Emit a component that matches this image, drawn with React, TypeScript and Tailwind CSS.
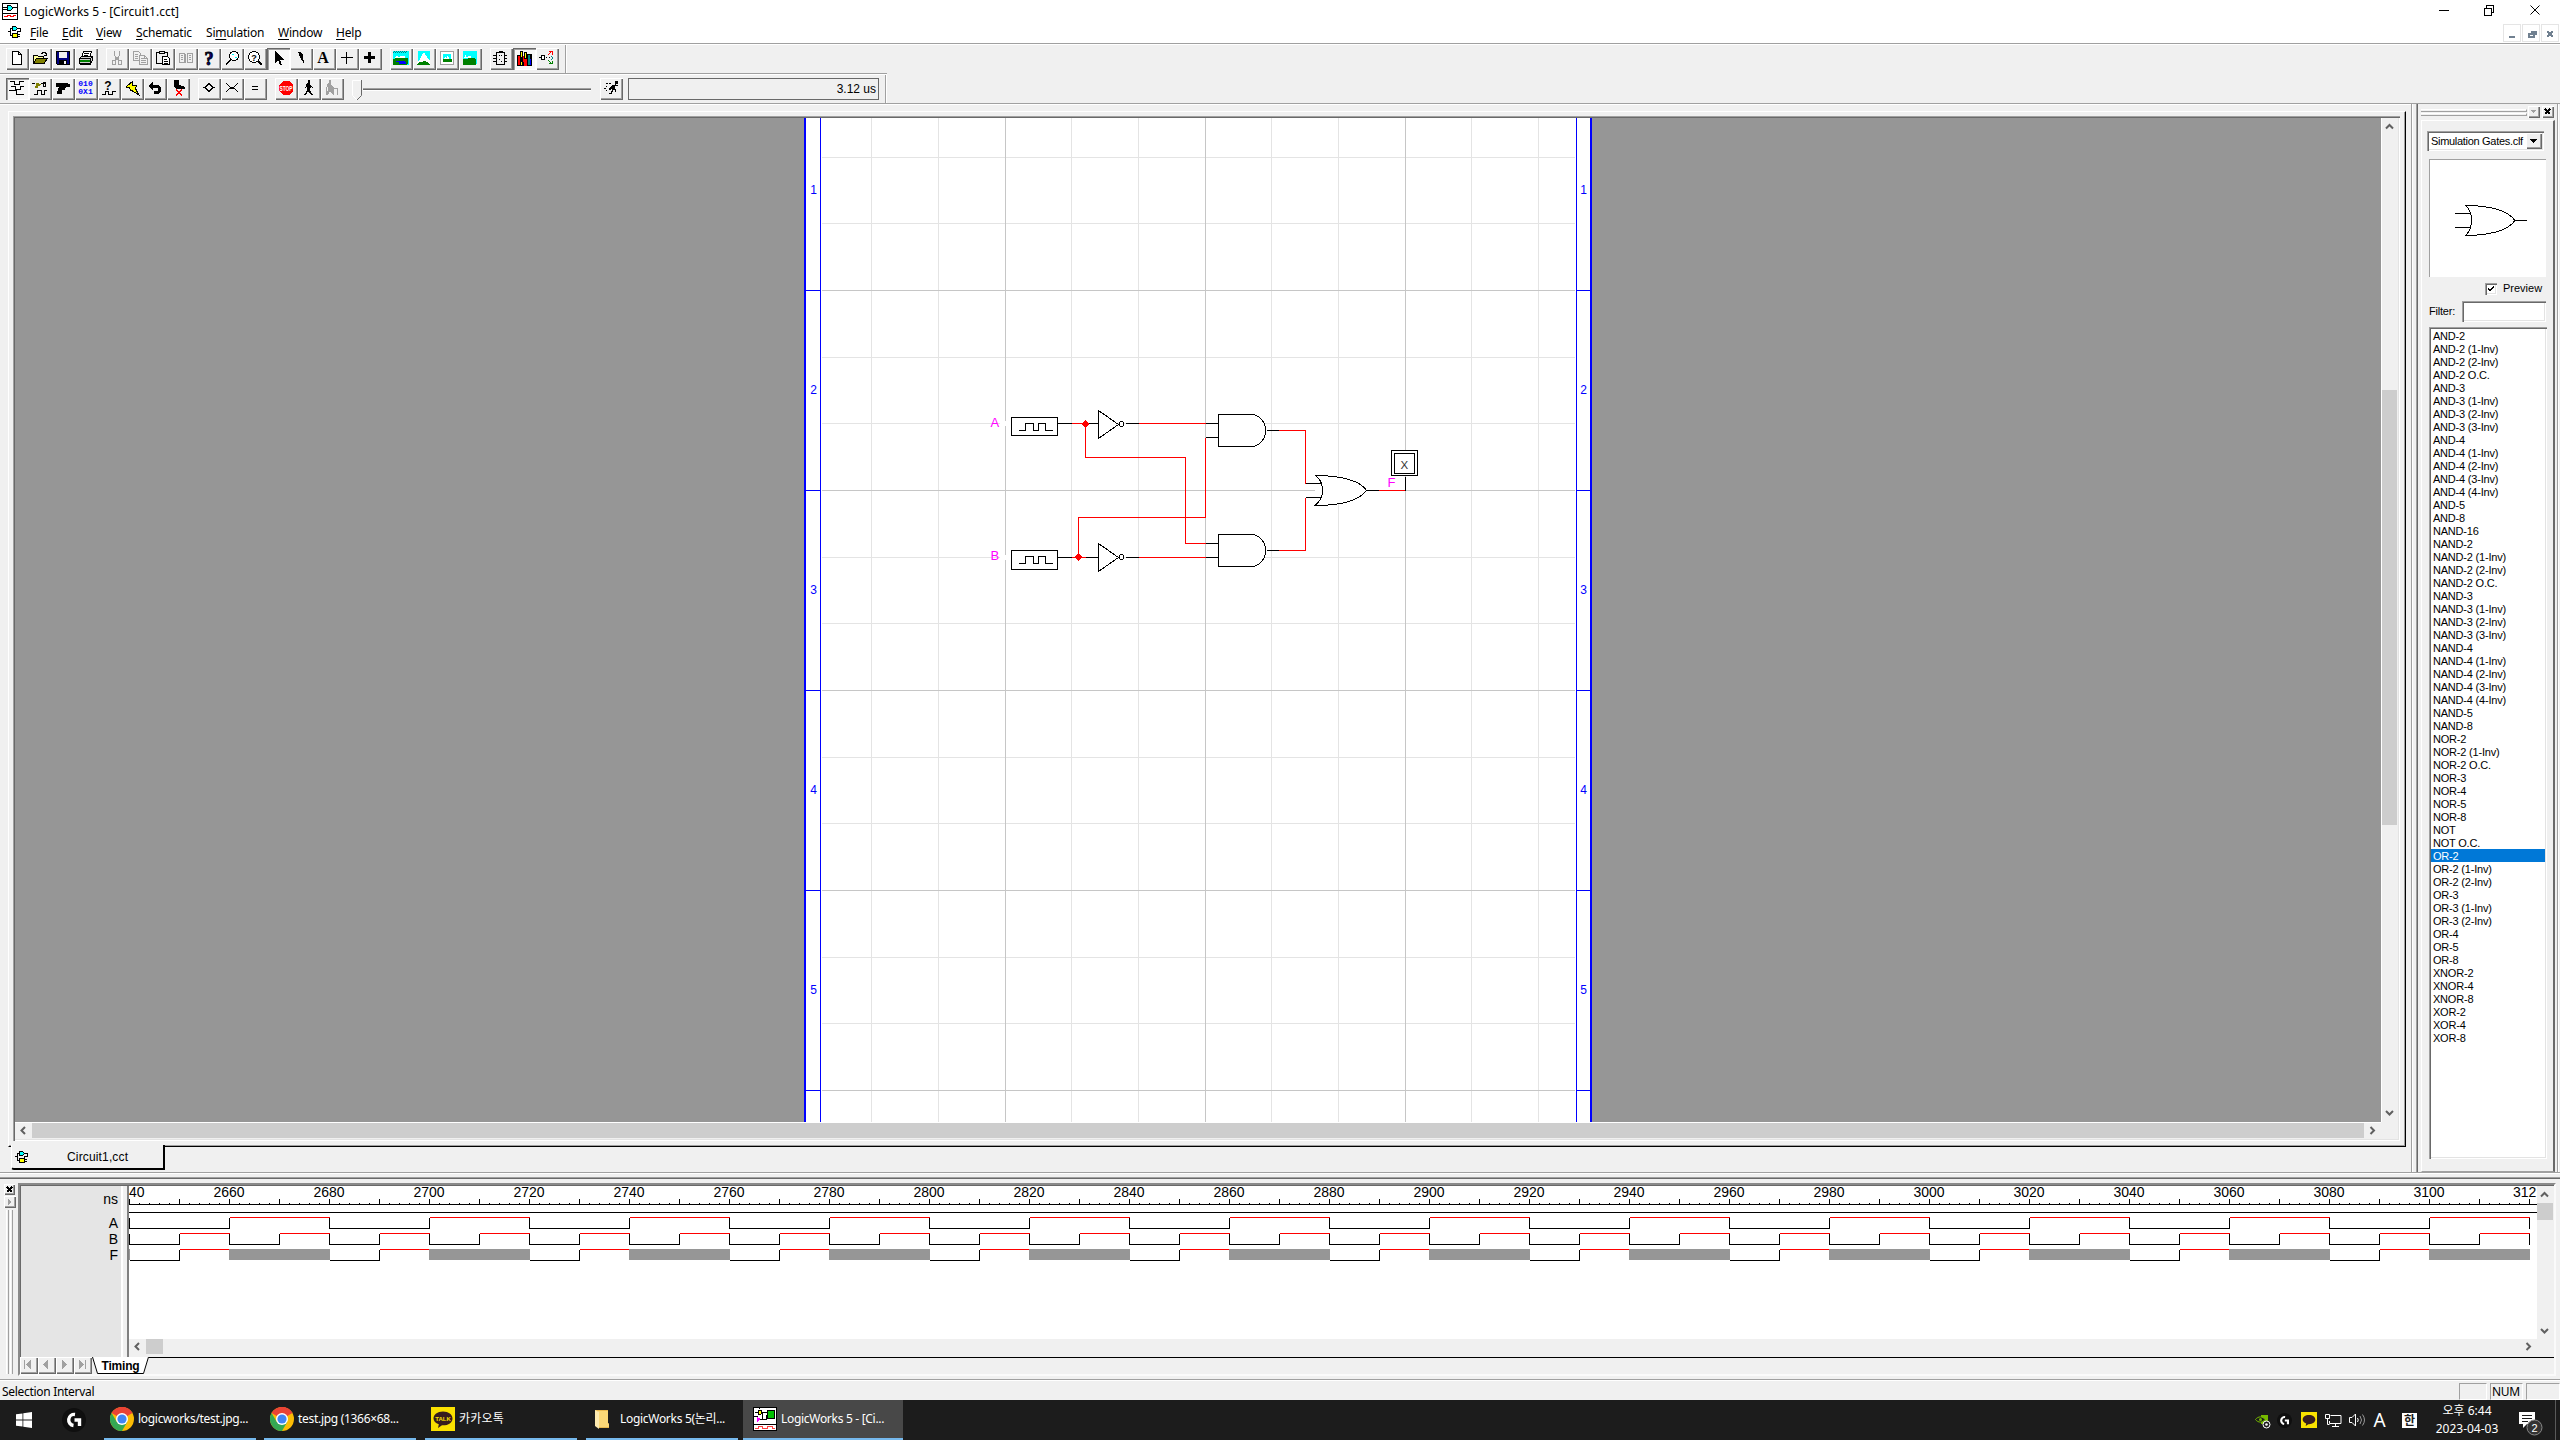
import React from "react";

const UI = "font-['Noto_Sans','Noto_Sans_CJK_KR',sans-serif]";
const SANS = "font-['Liberation_Sans','Noto_Sans_CJK_KR',sans-serif]";
const RAISED =
  "bg-[#f0f0f0] shadow-[inset_1px_1px_#ffffff,inset_-1px_-1px_#696969,inset_-2px_-2px_#a0a0a0]";
const PRESSED =
  "bg-[#f8f8f8] shadow-[inset_1px_1px_#696969,inset_2px_2px_#a0a0a0,inset_-1px_-1px_#ffffff]";

function Ico({ children, w = 16, h = 16, smooth = false }: { children: React.ReactNode; w?: number; h?: number; smooth?: boolean }) {
  return (
    <svg width={w} height={h} viewBox={`0 0 ${w} ${h}`} fill="none" shapeRendering={smooth ? "auto" : "crispEdges"} className="block shrink-0">
      {children}
    </svg>
  );
}

/* ---------- toolbar icons ---------- */
const K = "#000";
const icons: Record<string, React.ReactNode> = {
  new: <path d="M3.5 1.5h6l3 3v10h-9zM9.5 1.5v3h3" stroke={K} fill="#fff" />,
  open: (
    <>
      <path d="M1.5 13.5v-8h4l1 1h5v2" stroke={K} fill="#ffff9a" />
      <path d="M1.5 13.5l3-5h11l-3.500 5z" stroke={K} fill="#808000" />
      <path d="M9 3h1v-1h3v1h1v2M12 5h3" stroke={K} />
    </>
  ),
  save: (
    <>
      <path d="M1.500 1.500h13v13h-12l-1-1z" stroke={K} fill="#000080" />
      <path d="M4 2h8v6h-8z" fill="#f0f0f0" />
      <path d="M4 10h8v4h-8z" fill={K} />
      <path d="M9 11h2v3h-2z" fill="#f0f0f0" />
    </>
  ),
  print: (
    <>
      <path d="M5.500 1.500h8l-2 6h-8z" stroke={K} fill="#fff" />
      <path d="M6 3.500h5M6 5.500h4" stroke={K} />
      <path d="M1.500 8.500l2-2h11l-2 2zM1.500 8.500h11v5h-11zM12.500 8.500l2-2v4l-2 3z" stroke={K} fill="#d0d0d0" />
      <path d="M2 10h10v2h-10z" fill="#008000" />
      <path d="M2 13h11v2h-11z" fill={K} />
    </>
  ),
  cut: (
    <>
      <path d="M5.500 1v4l1 2v2M10.500 1v4l-1 2v2M6.500 7l3 3M9.500 7l-3 3" stroke="#a0a0a0" />
      <path d="M3.500 10.500h3v4h-3zM9.500 10.500h3v4h-3z" stroke="#a0a0a0" />
    </>
  ),
  copy: (
    <>
      <path d="M1.500 1.500h5l2 2v7h-7z" stroke="#a0a0a0" />
      <path d="M7.500 5.500h5l3 3v6h-8zM12.500 5.500v3h3M3 4.500h3M3 6.500h3M3 8.500h3M9 8.500h3M9 10.500h5M9 12.500h5" stroke="#a0a0a0" fill="#f0f0f0" />
    </>
  ),
  paste: (
    <>
      <path d="M1.500 2.500h11v11h-11z" stroke={K} fill="#f0f0f0" />
      <path d="M4 1h6v3h-6z" fill={K} />
      <path d="M5 2h4v1h-4z" fill="#f0f0f0" />
      <path d="M7.500 6.500h5l2 2v6h-7z" stroke={K} fill="#fff" />
      <path d="M9 9.500h3M9 11.500h4M9 13h4" stroke={K} />
    </>
  ),
  book: (
    <>
      <path d="M1.500 3.500h5v9h-5zM9.500 3.500h5v9h-5zM6.500 4.500h1v8h-1M8.500 4.500h1" stroke="#a0a0a0" />
      <path d="M3 5.500h2M3 7.500h2M3 9.500h2M11 5.500h2M11 7.500h2M11 9.500h2" stroke="#a0a0a0" />
    </>
  ),
  help: (
    <text x="8" y="14.500" fontSize="18" fontWeight="bold" textAnchor="middle" fill="#000080" stroke={K} strokeWidth="0.900" className="font-['Liberation_Serif',serif]">?</text>
  ),
  zoom: (
    <>
      <circle cx="10" cy="6" r="4.500" stroke={K} fill="#fff" />
      <path d="M8 4h2v1h-2zM11 7h2v1h-2z" fill="#00ffff" />
      <path d="M7 9.500l-5 5" stroke={K} strokeWidth="2" />
    </>
  ),
  zoomq: (
    <>
      <circle cx="7" cy="7" r="5.500" stroke={K} fill="#fff" />
      <text x="7" y="10.500" fontSize="9" fontWeight="bold" textAnchor="middle" fill={K} className={SANS}>?</text>
      <path d="M11 11l4 4" stroke={K} strokeWidth="1.500" />
    </>
  ),
  arrow: <path d="M5 1v12l3-3 2 5h2l-2-5h4z" fill={K} />,
  zap: <path d="M5 2h3l2 3 1 9-4-7z" fill={K} />,
  plus: <path d="M7.500 2v12M1.500 7.500h12" stroke={K} />,
  bplus: <path d="M7.500 2v11M2 7.500h11" stroke={K} strokeWidth="3" />,
  pic1: (
    <>
      <path d="M0 1h16v14h-16z" fill="#00ffff" />
      <path d="M1 1.500h1m1 0h1m1 0h1m1 0h1m1 0h1m1 0h1m1 0h1M0 2.500h1m1 0h1m1 0h1m1 0h1m1 0h1m1 0h1m1 0h1" stroke="#008080" />
      <path d="M2 7h1v-1h2v1h2v-1h5v2h-10z" fill="#fff" />
      <path d="M0 9l3-1h12v6l-2 1h-13z" fill="#008000" />
      <path d="M3 11.500h9M6 13h7" stroke="#0000ff" strokeWidth="1.500" />
    </>
  ),
  pic2: (
    <>
      <path d="M2 1h12v14h-12z" fill="#00ffff" />
      <path d="M7 3h2l1 3h1v2l3 3v4h-13v-2l3-4z" fill="#fff" />
      <path d="M1 15l2-3h3l1-1h2l1 1h2l2 3z" fill="#008000" />
    </>
  ),
  pic3: (
    <>
      <path d="M1.500 1.500h13v13h-13z" stroke="#a0a0a0" fill="#fff" />
      <path d="M4 4h8v5h-8z" fill="#00ffff" />
      <path d="M5 8h1v-1h1v1h1v-2h1v1h1v2h-5z" fill="#fff" />
      <path d="M4 9h9v3h-9z" fill="#008000" />
    </>
  ),
  pic4: (
    <>
      <path d="M1 1h14v13h-14z" fill="#00ffff" />
      <path d="M2 7h1v-2h1v2h2v-1h3v2h-7z" fill="#fff" />
      <path d="M1 9h4l1-1h6l2 2v5h-13z" fill="#008000" />
    </>
  ),
  chip: (
    <>
      <path d="M3.500 2.500h8v12h-8zM5.500 1.500h4M0 5.500h3M0 8.500h3M0 11.500h3M11 5.500h3M11 8.500h3M11 11.500h3" stroke={K} fill="#f0f0f0" />
      <path d="M6 5h1v1h-1zM8 5h1v1h-1zM6 9h1v1h-1zM8 11h1v1h-1z" fill={K} />
    </>
  ),
  books: (
    <>
      <path d="M1 5h4v11h-4z" fill={K} />
      <path d="M2 6h2v9h-2z" fill="#ff0000" />
      <path d="M4 1h3v15h-3z" fill={K} />
      <path d="M5 2h1v5h-1zM5 12h1v3h-1z" fill="#ffff00" />
      <path d="M7 6h4v10h-4z" fill="#ff0000" />
      <path d="M8 2h3v7h-3zM7 12h1v4h-1z" fill={K} />
      <path d="M9 3h1v5h-1z" fill="#ffff00" />
      <path d="M11 4h5v12h-5z" fill={K} />
      <path d="M12 5h2v10h-2z" fill="#008080" />
      <path d="M14 9h1v6h-1z" fill="#0000ff" />
    </>
  ),
  net: (
    <>
      <path d="M0 7.500h2M2.500 5.500h3v4h-3z" stroke={K} fill="#fff" />
      <path d="M7 7.500h1m2 0h1" stroke={K} />
      <path d="M9 5l4-4M10 1.500h3v3" stroke="#ff0000" />
      <path d="M9 10l4 4M10 13.500h3v-3" stroke="#008000" />
      <path d="M12 6l2 2-2 2" stroke="#008080" />
    </>
  ),
  waves: <path d="M1 1.500h4v3h5v-3h5M2 6.500h4v3h5v-3h4M0 10.500h7v4h8" stroke={K} />,
  probe: (
    <>
      <path d="M2 14.500h3v-4h4v4h3v-4h3M0 3.500h3M9 3.500h5M11 2h2v4h-2z" stroke={K} />
      <path d="M4 3h3v3h-3zM3 6h3v2h-3z" fill="#808000" />
      <path d="M6 6l3-2" stroke="#808000" />
    </>
  ),
  gun: <path d="M1 3h12v1h2v3h-3l-2 1v2h-3v4h-5v-2l2-5h-3z" fill={K} />,
  trig: (
    <>
      <path d="M1 14.500h3v-3h3v3h4v-3h4" stroke={K} />
      <text x="7" y="9.500" fontSize="12" fontWeight="bold" textAnchor="middle" fill={K} className={SANS}>?</text>
    </>
  ),
  bolt: <path d="M2.500 6.500l6-5v4h4l-1 3 3 6-7-4h-1l-1-3h-3z" fill="#ffff00" stroke={K} />,
  undo: <path d="M1 6l5-4v3h5l3 3v3l-3 3h-4v-3h3l1-1v-1l-1-1h-4v3z" fill={K} />,
  boot: (
    <>
      <path d="M4 0h5v5l6 2v2h-8l-3-2z" fill={K} />
      <path d="M6 10l6 5M12 10l-6 5" stroke="#ff0000" strokeWidth="1.500" />
    </>
  ),
  diamond: <path d="M2 7.500h2l4-4 4 4h2M4 7.500l4 4 4-4" stroke={K} />,
  cross: <path d="M2 3l4 4h4l4-4M2 12l4-4h4l4 4" stroke={K} />,
  eq: <path d="M5 6.500h6M5 9.500h6" stroke={K} />,
  stop: (
    <>
      <path d="M5 1h6l4 4v6l-4 4h-6l-4-4v-6z" fill="#ff0000" />
      <text x="8" y="10.500" fontSize="6.500" fontWeight="bold" textAnchor="middle" fill="#fff" textLength="13" lengthAdjust="spacingAndGlyphs" className={SANS}>STOP</text>
    </>
  ),
  walk: <path d="M7 0h2v3h-2zM6 3h3l1 3 2 1v1l-2-1v1h-1v2l2 4h1v1h-2l-3-4-2 4h-2v-1h1l2-4v-4l-1 2h-1z" fill={K} />,
  walkg: (
    <path d="M5 0h2v3h-2zM4 3h3l1 3 2 1v1h4v7h-1v-6h-3v6h-1l-3-4-2 4h-2v-1l2-4v-4l-1 2h-1zM2 8h1v7h-1z" fill="#a0a0a0" />
  ),
  run: <path d="M12 1h3v3h-2v1h2v1h-3v3h1v3h-1v-2h-2l-1 4h-3v-1h2l1-4-3 1v-1l3-4h3zM6 3h2v1h-2zM3 3h2v1h-2zM3 6h1v1h-1zM1 8h2v1h-2zM3 10h1v1h-1z" fill={K} />,
};

function Tool({ name, pressed }: { name: string; pressed?: boolean }) {
  let body: React.ReactNode;
  if (name === "A") body = <span className="pr-px font-['Liberation_Serif',serif] text-[16px] font-bold leading-[16px]">A</span>;
  else if (name === "bits")
    body = (
      <span className="flex flex-col font-['Liberation_Mono',monospace] text-[8px] font-bold leading-[8px] text-[#0000ff]">
        <span>010</span>
        <span>0X1</span>
      </span>
    );
  else body = <Ico>{icons[name]}</Ico>;
  return (
    <div className={`flex h-[22px] w-[23px] items-center justify-center pr-[2px] pb-[2px] ${pressed ? PRESSED : RAISED}`}>{body}</div>
  );
}

function Group({ names, pressed }: { names: string[]; pressed?: string }) {
  return (
    <div className="flex">
      {names.map((n) => (
        <Tool key={n} name={n} pressed={n === pressed} />
      ))}
    </div>
  );
}

function CircuitIcon() {
  return (
    <Ico w={13} h={14}>
      <path d="M0 6.500h2M2.500 3v8M2 3.500h2M2 10.500h2M9 3.500h3v3h-3v2M10 9.500h2M10 11.500h2" stroke={K} />
      <path d="M4 1h4v1h1v1h1v1h-1v1h-1v1h-4zM4 8h6v5h-6z" fill={K} />
      <path d="M5 2h3v1h1v1h-1v1h-3z" fill="#00ffff" />
      <path d="M5 9h4v3h-4z" fill="#ffff00" />
    </Ico>
  );
}

/* ---------- title + menu ---------- */
const menus: [string, string, string, string][] = [
  ["", "F", "ile", "ml-[9px]"],
  ["", "E", "dit", "ml-[14px]"],
  ["", "V", "iew", "ml-[14px]"],
  ["", "S", "chematic", "ml-[14px]"],
  ["Si", "m", "ulation", "ml-[14px]"],
  ["", "W", "indow", "ml-[14px]"],
  ["", "H", "elp", "ml-[14px]"],
];
const menuWidths = ["w-[18px]", "w-[20px]", "w-[26px]", "w-[56px]", "w-[58px]", "w-[44px]", "w-[26px]"];

function TitleBar() {
  return (
    <div className="flex h-[24px] items-start bg-white">
      <div className="mt-[3px] ml-[2px]">
        <Ico h={17}>
          <path d="M.5.5h15v15.500h-15z" stroke={K} fill="#fff" />
          <path d="M1 10.500h14M1 4.500h4M10 4.500h5M1 6.500h4" stroke={K} />
          <path d="M5 2h4v1h1v1h1v2h-1v1h-1v1h-4z" fill={K} />
          <path d="M6 3h3v1h1v2h-1v1h-3z" fill="#00ffff" />
          <path d="M2 13.500h3v-1h3v1h3v-1h3" stroke="#ff0000" />
        </Ico>
      </div>
      <div className={`${UI} ml-[6px] text-[12px] leading-[23px] whitespace-nowrap text-black`}>LogicWorks 5 - [Circuit1.cct]</div>
      <div className="ml-auto flex pr-[19px] pt-[3px]">
        <svg width="103" height="14" viewBox="2438 3 103 14" fill="none" stroke={K}>
          <path d="M2439 10.500h10M2484.500 8.500h7v7h-7zM2486.500 8v-2.500h7v7h-2" shapeRendering="crispEdges" />
          <path d="M2530.500 5.500l9 9M2539.500 5.500l-9 9" />
        </svg>
      </div>
    </div>
  );
}

function MenuBar() {
  return (
    <div className="flex h-[19px] items-start bg-white">
      <div className="mt-px ml-[8px]">
        <CircuitIcon />
      </div>
      <div className={`${UI} flex text-[12px] leading-[17px] tracking-[-0.2px] text-black`}>
        {menus.map(([a, u, b, m], i) => (
          <span key={u + b} className={`${m} ${menuWidths[i]} whitespace-nowrap`}>
            {a}
            <span className="underline underline-offset-2">{u}</span>
            {b}
          </span>
        ))}
      </div>
      <div className="ml-auto flex gap-px pr-px">
        {["M5 11.500h6", "M5.500 8.500h5v3h-5zM8 6.500h4.500v3.500", "M5.500 6l5 6M10.500 6l-5 6"].map((d) => (
          <div key={d} className="h-[18px] w-[18px] border border-[#e5e5e5]">
            <Ico>
              <path d={d} stroke="#708090" strokeWidth="2" />
            </Ico>
          </div>
        ))}
      </div>
    </div>
  );
}

/* ---------- schematic ---------- */
function AndGate({ y }: { y: number }) {
  return <path d={`M1218 ${y}H1252C1260 ${y + 1} 1265 ${y + 8} 1265 ${y + 16}S1260 ${y + 31} 1252 ${y + 32}H1218Z`} fill="#fff" />;
}
function ClockSrc({ y, h }: { y: number; h: number }) {
  return (
    <>
      <rect x="1011" y={y} width="46" height={h} fill="#fff" />
      <path d={`M1018 ${y + 13}h7v-7h8v7h5v-7h7v7h7`} />
    </>
  );
}
const minorX = [871, 938, 1071, 1138, 1271, 1338, 1471, 1538];
const majorX = [1005, 1205, 1405];
const minorY = [157, 223, 357, 423, 557, 623, 757, 823, 957, 1023];
const majorY = [290, 490, 690, 890, 1090];

function Schematic() {
  return (
    <svg width="2366" height="1004" viewBox="15 118 2366 1004" fill="none" className="block" shapeRendering="crispEdges">
      <rect x="15" y="118" width="2366" height="1004" fill="#969696" />
      <rect x="804" y="118" width="788" height="1004" fill="#fff" />
      <g transform="translate(.5 .5)">
        <path stroke="#e4e4e4" d={minorX.map((x) => `M${x} 117V1122`).join("") + minorY.map((y) => `M821 ${y}H1574.500`).join("")} />
        <path stroke="#c6c6c6" d={majorX.map((x) => `M${x} 117V1122`).join("") + majorY.map((y) => `M821 ${y}H1574.500`).join("")} />
        <path stroke="#00f" d={"M820 117V1122M1576 117V1122" + majorY.map((y) => `M805 ${y}H820M1576 ${y}H1591`).join("")} />
      </g>
      <path stroke="#00f" strokeWidth="2" d="M805 118V1122M1591 118V1122" />
      <g className={SANS} fontSize="12" fill="#00f" textAnchor="middle">
        {[1, 2, 3, 4, 5].map((n) => (
          <React.Fragment key={n}>
            <text x="813.500" y={194 + (n - 1) * 200}>{n}</text>
            <text x="1583.500" y={194 + (n - 1) * 200}>{n}</text>
          </React.Fragment>
        ))}
      </g>
      <rect x="1000" y="421" width="11" height="5" fill="#fff" />
      <rect x="1000" y="555" width="11" height="5" fill="#fff" />
      <rect x="1315" y="488" width="8" height="5" fill="#fff" />
      <g transform="translate(.5 .5)" stroke="#f00">
        <path d="M1071 423H1085V457H1185V543H1205M1138 423H1205M1071 557H1098M1078 557V517H1205V437M1138 557H1205M1278 430H1305V483M1278 550H1305V497M1378 490H1405" />
      </g>
      <g transform="translate(.5 .5)" stroke="#000">
        <path d="M1057 423H1071M1085 423H1098M1057 557H1071M1085 557H1098M1125 423H1138M1125 557H1138M1205 423H1218M1205 437H1218M1205 543H1218M1205 557H1218M1266 430H1278M1266 550H1278M1366 490H1378M1405 490V476" />
        <ClockSrc y={417} h={18} />
        <ClockSrc y={550} h={19} />
        <path d="M1098 410L1118 424L1098 438ZM1098 543L1118 557L1098 571Z" fill="#fff" />
        <circle cx="1121" cy="423.500" r="2.500" fill="#fff" />
        <circle cx="1121" cy="556.500" r="2.500" fill="#fff" />
        <AndGate y={414} />
        <AndGate y={534} />
        <path d="M1315 475C1340 475 1360 480 1366 490C1358 501 1340 505 1314 505Q1322 500 1322 490Q1322 480 1315 475Z" fill="#fff" />
        <path d="M1305 483H1321M1305 497H1321" />
        <rect x="1391" y="450" width="26" height="25" fill="#fff" />
        <rect x="1394" y="453" width="20" height="20" />
      </g>
      <path d="M1085.500 420.500l3.500 3.500-3.500 3.500-3.500-3.500zM1078.500 553.500l3.500 3.500-3.500 3.500-3.500-3.500z" fill="#f00" stroke="#f00" />
      <g className={SANS} fontSize="13" fill="#f0f" stroke="none">
        <text x="990.500" y="427">A</text>
        <text x="990.500" y="560">B</text>
        <text x="1387.500" y="487">F</text>
        <text x="1400.500" y="469" fill="#333" fontSize="11.500">X</text>
      </g>
    </svg>
  );
}

/* ---------- scrollbars ---------- */
function Chevron({ d }: { d: string }) {
  return (
    <svg width="17" height="17" viewBox="0 0 17 17" fill="none" className="block shrink-0">
      <path d={d} stroke="#606060" strokeWidth="2" />
    </svg>
  );
}
const UP = "M4 10.500l3.500-3.500 3.500 3.500";
const DOWN = "M4 6l3.500 3.500 3.500-3.500";
const LEFT = "M10 4l-3.500 3.500 3.500 3.500";
const RIGHT = "M6.500 4l3.500 3.500-3.500 3.500";

/* ---------- library panel ---------- */
const parts = [
  "AND-2", "AND-2 (1-Inv)", "AND-2 (2-Inv)", "AND-2 O.C.", "AND-3", "AND-3 (1-Inv)", "AND-3 (2-Inv)", "AND-3 (3-Inv)",
  "AND-4", "AND-4 (1-Inv)", "AND-4 (2-Inv)", "AND-4 (3-Inv)", "AND-4 (4-Inv)", "AND-5", "AND-8", "NAND-16",
  "NAND-2", "NAND-2 (1-Inv)", "NAND-2 (2-Inv)", "NAND-2 O.C.", "NAND-3", "NAND-3 (1-Inv)", "NAND-3 (2-Inv)", "NAND-3 (3-Inv)",
  "NAND-4", "NAND-4 (1-Inv)", "NAND-4 (2-Inv)", "NAND-4 (3-Inv)", "NAND-4 (4-Inv)", "NAND-5", "NAND-8",
  "NOR-2", "NOR-2 (1-Inv)", "NOR-2 O.C.", "NOR-3", "NOR-4", "NOR-5", "NOR-8", "NOT", "NOT O.C.",
  "OR-2", "OR-2 (1-Inv)", "OR-2 (2-Inv)", "OR-3", "OR-3 (1-Inv)", "OR-3 (2-Inv)", "OR-4", "OR-5", "OR-8",
  "XNOR-2", "XNOR-4", "XNOR-8", "XOR-2", "XOR-4", "XOR-8",
];
const SUNKEN =
  "bg-white shadow-[inset_1px_1px_#a0a0a0,inset_2px_2px_#696969,inset_-1px_-1px_#ffffff,inset_-2px_-2px_#e3e3e3]";

function LibraryPanel() {
  return (
    <div className="flex h-[1068px] w-[149px] border-l border-[#a0a0a0]">
      <div className="w-[4px] border-l border-white" />
      <div className="w-[2px] border-l border-[#a0a0a0] bg-[#696969]" />
      <div className="flex w-[140px] flex-col pl-[3px]">
        <div className="flex h-[16px] items-start pt-[2px]">
          <div className="mt-[3px] mr-px flex w-[106px] flex-col gap-[1px]">
            <div className="h-[3px] border-t border-r border-b border-t-white border-r-[#a0a0a0] border-b-[#a0a0a0]" />
            <div className="h-[3px] border-t border-r border-b border-t-white border-r-[#a0a0a0] border-b-[#a0a0a0]" />
          </div>
          <div className={`flex h-[12px] w-[12px] items-center justify-center ${RAISED}`}>
            <Ico w={5} h={4}>
              <path d="M0 0h5l-2.500 3z" fill="#a0a0a0" />
            </Ico>
          </div>
          <div className={`ml-[2px] flex h-[12px] w-[12px] items-center justify-center pr-px pb-px ${RAISED}`}>
            <Ico w={7} h={7}>
              <path d="M1 1l5 5M6 1l-5 5" stroke={K} strokeWidth="2" />
            </Ico>
          </div>
        </div>
        <div className={`${SANS} flex h-[1052px] w-[134px] flex-col border-t border-r-2 border-b border-l border-t-white border-r-[#696969] border-b-[#a0a0a0] border-l-white pl-[7px] text-[11px] tracking-[-0.2px] text-black`}>
          <div className={`-ml-[2px] mt-[10px] flex h-[20px] w-[117px] items-center ${SUNKEN}`}>
            <span className="w-[99px] pl-[4px] tracking-[-0.3px] whitespace-nowrap">Simulation Gates.clf</span>
            <div className={`flex h-[16px] w-[16px] items-center justify-center ${RAISED}`}>
              <Ico w={7} h={4}>
                <path d="M0 0h7l-3.500 4z" fill={K} />
              </Ico>
            </div>
          </div>
          <div className="mt-[8px] h-[118px] w-[117px] border-t border-l border-[#a0a0a0] bg-white">
            <svg width="116" height="117" viewBox="2430 160 116 117" fill="none" stroke={K} shapeRendering="crispEdges" className="block">
              <path d="M2455 213.500H2471M2455 227.500H2471M2515 220.500H2527M2466 205.500C2488 205.500 2508 210 2515 220.500C2508 231 2488 235.500 2465.500 235.500Q2471.500 230 2471.500 220.500T2466 205.500Z" />
            </svg>
          </div>
          <div className="mt-[4px] flex h-[15px] items-center pl-[56px]">
            <div className={`flex h-[12px] w-[12px] items-center justify-center ${SUNKEN}`}>
              <Ico w={8} h={8}>
                <path d="M1 3.500l2 2 4-4" stroke={K} strokeWidth="2" />
              </Ico>
            </div>
            <span className="pl-[6px] text-[11px] tracking-[0px]">Preview</span>
          </div>
          <div className="mt-[5px] flex h-[21px] items-center">
            <span className="w-[33px]">Filter:</span>
            <div className={`h-[21px] w-[84px] ${SUNKEN}`} />
          </div>
          <div className={`mt-[5px] flex h-[832px] w-[118px] flex-col p-[2px] ${SUNKEN}`}>
            {parts.map((p) => (
              <div key={p} className={`h-[13px] pt-px pl-[2px] leading-[12px] whitespace-nowrap ${p === "OR-2" ? "bg-[#0078d7] text-white" : ""}`}>
                {p}
              </div>
            ))}
          </div>
        </div>
      </div>
      <div className="mr-px w-[2px] border-l border-[#a0a0a0] bg-white" />
    </div>
  );
}

/* ---------- timing diagram ---------- */
const periods = Array.from({ length: 12 }, (_, i) => 129 + i * 200);
const ticks = Array.from({ length: 241 }, (_, i) => i);
const labels = Array.from({ length: 23 }, (_, i) => i + 1);

function Timing() {
  const aRed = periods.map((x) => `M${x + 100} 1217h100`).join("");
  const aBlk = periods.map((x) => `M${x} 1217v11h100v-11M${x + 200} 1217v11`).join("");
  const bRed = periods.map((x) => `M${x + 50} 1233h50M${x + 150} 1233h50`).join("");
  const bBlk = periods.map((x) => `M${x} 1233v11h50v-11M${x + 100} 1233v11h50v-11M${x + 200} 1233v11`).join("");
  const fRed = periods.map((x) => `M${x + 50} 1249h50`).join("");
  const fBlk = periods.map((x) => `M${x} 1260h50v-11`).join("");
  return (
    <svg width="2408" height="153" viewBox="129 1186 2408 153" fill="none" shapeRendering="crispEdges" className="block bg-white">
      <g transform="translate(.5 .5)" stroke={K}>
        <path d={"M128 1204H2537M128 1212H2537" + ticks.map((i) => `M${129 + i * 10} 1204v${i % 5 === 0 ? -6 : -2}`).join("")} />
        <path d={aRed + bRed + fRed} stroke="#f00" />
        <path d={aBlk + bBlk + fBlk} />
      </g>
      {periods.map((x) => (
        <rect key={x} x={x + 100} y="1249" width="101" height="11" fill="#969696" />
      ))}
      <rect x="129" y="1249" width="1" height="11" fill="#969696" />
      <g className={SANS} fontSize="14" fill="#000">
        <text x="129" y="1197">40</text>
        {labels.map((i) => (
          <text key={i} x={129 + i * 100} y="1197" textAnchor="middle">{2640 + i * 20}</text>
        ))}
        <text x="2513" y="1197">312</text>
      </g>
    </svg>
  );
}

const navs = ["M4.500 3v9", "", "", "M11.500 3v9"];
const navTri = ["M11 3v9l-5-4.500z", "M10 3v9l-5-4.500z", "M6 3v9l5-4.500z", "M5 3v9l5-4.500z"];

function TimingDock() {
  return (
    <div className="flex h-[207px] flex-col border-t border-[#a0a0a0]">
      <div className="h-[4px] border-t border-white" />
      <div className="h-[2px] border-t border-[#a0a0a0] bg-[#696969]" />
      <div className="flex h-[200px] pt-[4px]">
        <div className="flex w-[18px] flex-col items-center pt-px pl-[4px] pr-[3px]">
          <div className={`flex h-[11px] w-[11px] items-center justify-center pr-px pb-px ${RAISED}`}>
            <Ico w={7} h={7}>
              <path d="M1 1l5 5M6 1l-5 5" stroke={K} strokeWidth="2" />
            </Ico>
          </div>
          <div className={`mt-px flex h-[12px] w-[12px] items-center justify-center ${RAISED}`}>
            <Ico w={4} h={6}>
              <path d="M0 0v6l4-3z" fill="#a0a0a0" />
            </Ico>
          </div>
          <div className="mt-[2px] flex h-[164px] gap-px">
            <div className="w-[3px] border-r border-l border-l-white border-r-[#a0a0a0]" />
            <div className="w-[3px] border-r border-l border-l-white border-r-[#a0a0a0]" />
          </div>
        </div>
        <div className="flex h-[193px] w-[2538px] flex-col border-t-2 border-r-2 border-b-2 border-l-2 border-t-[#8a8a8a] border-r-[#fafafa] border-b-[#fafafa] border-l-[#8a8a8a]">
          <div className="flex h-[172px] border-t border-[#696969]">
            <div className={`${SANS} flex w-[103px] flex-col items-end border-r-2 border-l border-r-white border-l-[#696969] bg-[#e5e5e5] pr-[3px] text-[14px] leading-[16px] text-black`}>
              <span className="mt-[5px]">ns</span>
              <span className="mt-[8px]">A</span>
              <span>B</span>
              <span>F</span>
            </div>
            <div className="w-[6px] border-r-2 border-[#808080] bg-[#f0f0f0]" />
            <div className="flex w-[2408px] flex-col">
              <Timing />
              <div className="flex h-[17px] items-start bg-[#f0f0f0]">
                <Chevron d={LEFT} />
                <div className="h-[15px] w-[17px] bg-[#cdcdcd]" />
                <div className="ml-auto">
                  <Chevron d={RIGHT} />
                </div>
              </div>
            </div>
            <div className="flex w-[17px] flex-col">
              <Chevron d={UP} />
              <div className="h-[17px] w-[16px] bg-[#cdcdcd]" />
              <div className="mt-auto mb-[17px]">
                <Chevron d={DOWN} />
              </div>
            </div>
          </div>
          <div className="flex h-[17px] items-start">
            {navTri.map((d, i) => (
              <div key={d} className={`h-[17px] w-[18px] ${RAISED}`}>
                <Ico>
                  <path d={d} fill="#a0a0a0" />
                  {navs[i] && <path d={navs[i]} stroke="#a0a0a0" />}
                </Ico>
              </div>
            ))}
            <div className="relative h-[17px] w-[57px]">
              <svg width="57" height="17" viewBox="0 0 57 17" className="block">
                <path d="M0 0h57l-5 16.500h-47z" fill="#fff" />
                <path d="M.5 0l5 16.500h46l5-16.500" fill="none" stroke={K} />
              </svg>
              <span className={`${SANS} absolute inset-0 text-center text-[12px] leading-[18px] font-bold tracking-[-0.2px] text-black`}>Timing</span>
            </div>
            <div className="flex-1 self-stretch border-t border-black" />
          </div>
        </div>
      </div>
    </div>
  );
}

/* ---------- taskbar ---------- */
function Chrome() {
  return (
    <svg width="24" height="24" viewBox="0 0 24 24" className="block">
      <circle cx="12" cy="12" r="12" fill="#fbbc05" />
      <path d="M12 12L1.600 6A12 12 0 0 1 22.400 6z" fill="#ea4335" />
      <path d="M12 0a12 12 0 0 1 10.400 6H12z" fill="#ea4335" />
      <path d="M1.600 6A12 12 0 0 0 12 24L17.200 15 6.800 15z" fill="#34a853" />
      <circle cx="12" cy="12" r="6" fill="#fff" />
      <circle cx="12" cy="12" r="4.600" fill="#4285f4" />
    </svg>
  );
}
function GLogo({ s }: { s: number }) {
  return (
    <svg width={s} height={s} viewBox="0 0 24 24" className="block" fill="none">
      <circle cx="12" cy="12" r="12" fill="#0f0f0f" />
      <path d="M13 6.500A5.500 5.500 0 1 0 11.500 17.500M12.500 12h5v6" stroke="#fff" strokeWidth="3.400" />
    </svg>
  );
}
function Kakao({ s, label }: { s: number; label?: boolean }) {
  return (
    <div className="flex items-center justify-center bg-[#fae100]" style={{ width: s, height: s }}>
      <svg width={s} height={s} viewBox="0 0 24 24">
        <path d="M12 4.500c5.500 0 9.500 2.900 9.500 6.900s-4 6.900-9.500 6.900l-1-.1-4 2.800.8-3.700C4.500 16.100 2.500 14 2.500 11.400c0-4 4-6.900 9.500-6.900z" fill="#371d1e" />
        {label && (
          <text x="12" y="13.800" fontSize="6" fontWeight="bold" textAnchor="middle" fill="#fae100" className={`${SANS} tracking-normal`}>
            TALK
          </text>
        )}
      </svg>
    </div>
  );
}
function Task({ icon, text, cls, active, pad = "pl-[6px]", gap = "ml-[4px]" }: { icon: React.ReactNode; text: string; cls: string; active?: boolean; pad?: string; gap?: string }) {
  return (
    <div className={`flex h-[40px] items-center border-b-2 border-[#76b9ed] ${cls} ${pad} ${active ? "bg-[#484848]" : ""}`}>
      {icon}
      <span className={`${gap} whitespace-nowrap`}>{text}</span>
    </div>
  );
}

function Taskbar() {
  return (
    <div className={`${UI} flex h-[40px] items-center bg-[#1c1c1c] text-[12px] tracking-[-0.3px] text-white`}>
      <svg width="16" height="16" viewBox="0 0 16 16" className="ml-[16px]" fill="#fff">
        <path d="M0 2.300L6.500 1.400V7.600H0zM7.300 1.300L16 0V7.600H7.300zM0 8.400H6.500V14.600L0 13.700zM7.300 8.400H16V16L7.300 14.700z" />
      </svg>
      <div className="ml-[30px]">
        <GLogo s={24} />
      </div>
      <Task cls="ml-[18px] w-[152px]" icon={<Chrome />} text="logicworks/test.jpg..." />
      <Task cls="ml-[8px] w-[152px]" icon={<Chrome />} text="test.jpg (1366×68..." />
      <Task cls="ml-[9px] w-[152px] tracking-[0.2px]" icon={<Kakao s={24} label />} text="카카오톡" />
      <Task
        cls="ml-[9px] w-[152px]"
        pad="pl-[9px]"
        gap="ml-[10px]"
        icon={
          <svg width="15" height="22" viewBox="0 0 15 22">
            <path d="M0 2h13v13l1 1v4H3z" fill="#e9b94e" />
            <path d="M3 3h10v12l1 1v3H3z" fill="#fbd877" />
            <path d="M0 2l4 2v17L0 18z" fill="#fdeab0" />
          </svg>
        }
        text="LogicWorks 5(논리..."
      />
      <Task
        cls="ml-[5px] w-[160px]"
        pad="pl-[10px]"
        active
        icon={
          <Ico w={24} h={24}>
            <path d="M0 0h24v24h-24z" fill="#fff" />
            <path d="M0 .5h24M0 17.500h24M.5 0v24M23.500 0v24M0 23.500h24M2 5.500h12M9.500 6v7M6 12.500h7v-4h2M1 9h4" stroke={K} />
            <path d="M5 3h3l1 2-1 2h-3zM6 1h1" fill="#ffff00" stroke={K} />
            <path d="M14 3h7v8h-7z" fill="#00c000" stroke={K} />
            <path d="M4 10l4 2-4 3z" fill="#ff00ff" />
            <path d="M2 21.500h3v-2h4v2h5v-2h5v2h3" stroke="#ff4040" />
          </Ico>
        }
        text="LogicWorks 5 - [Ci..."
      />
      <div className="ml-auto flex h-[40px] items-center">
        <svg width="16" height="16" viewBox="0 0 16 16" className="mt-[2px]" fill="none">
          <path d="M6 2h7v9H6z" fill="#76b900" />
          <path d="M0.500 6.500C3 3 8 3 10 6.500 8 10 3 10 .5 6.500z" fill="#1c1c1c" stroke="#76b900" />
          <circle cx="5.500" cy="6.500" r="1.500" fill="#76b900" />
          <circle cx="11.500" cy="11.500" r="3.500" fill="#1c1c1c" stroke="#fff" />
          <circle cx="11.500" cy="11.500" r="1.300" fill="#fff" />
        </svg>
        <div className="ml-[6px]">
          <GLogo s={15} />
        </div>
        <div className="ml-[9px]">
          <Kakao s={16} />
        </div>
        <svg width="17" height="16" viewBox="0 0 17 16" className="ml-[8px] mt-[2px]" fill="none" stroke="#fff">
          <path d="M5.500 2.500h10.500v8H4.500V8M10.500 10.500v3M7 13.500h7M.5 1.500h4v4h-4zM2.500 5.500v6h2" />
        </svg>
        <svg width="17" height="16" viewBox="0 0 17 16" className="ml-[7px]" fill="none" stroke="#fff">
          <path d="M.5 5.500h2.500l3.500-3.500v12l-3.500-3.500h-2.500zM8.500 6q1.500 2 0 4" />
          <path d="M11 4q3 4 0 8M13.500 2.500q4 5.500 0 11" stroke="#999" />
        </svg>
        <span className="ml-[7px] w-[13px] text-center text-[19px] leading-[20px] tracking-normal">A</span>
        <span className="ml-[16px] flex h-[15px] w-[15px] items-center justify-center bg-white text-[12px] leading-[15px] font-bold tracking-normal text-[#1c1c1c]">한</span>
        <div className="ml-[16px] flex w-[68px] flex-col items-center leading-[18px] tracking-[0px] whitespace-nowrap">
          <span>오후 6:44</span>
          <span>2023-04-03</span>
        </div>
        <svg width="26" height="26" viewBox="2518 1410 26 26" className="ml-[17px] mt-[6px]" fill="none">
          <path d="M2519 1412h16v12h-8l-4 4v-4h-4z" fill="#fff" />
          <path d="M2522 1415.500h10M2522 1418.500h10M2522 1421.500h6" stroke="#1c1c1c" />
          <circle cx="2534.500" cy="1427.500" r="7.500" fill="#333" stroke="#888" />
          <text x="2534.500" y="1431.500" fontSize="11" fill="#fff" textAnchor="middle" className={SANS}>2</text>
        </svg>
        <div className="ml-[11px] mr-[4px] h-[40px] w-px bg-[#5a5a5a]" />
      </div>
    </div>
  );
}

export default function App() {
  return (
    <div className="flex h-[1440px] w-[2560px] flex-col overflow-hidden bg-[#f0f0f0]">
      <TitleBar />
      <MenuBar />
      <div className="h-[30px] border-t border-[#a0a0a0]">
        <div className="flex h-[29px] border-t border-white">
          <div className="flex gap-[8px] pt-[3px] pl-[6px]">
            <Group names={["new", "open", "save", "print"]} />
            <Group names={["cut", "copy", "paste", "book", "help", "zoom", "zoomq", "arrow", "zap", "A", "plus", "bplus"]} pressed="arrow" />
            <Group names={["pic1", "pic2", "pic3", "pic4"]} />
            <Group names={["chip", "books", "net"]} pressed="books" />
          </div>
          <div className="ml-[6px] h-[28px] w-[2px] border-l border-[#a0a0a0] bg-white" />
        </div>
      </div>
      <div className="h-[30px]">
        <div className="flex h-[30px] w-[887px] border-t border-[#a0a0a0]">
          <div className="flex h-[29px] w-[887px] border-t border-white">
            <div className="flex gap-[8px] pt-[3px] pl-[6px]">
              <Group names={["waves", "probe", "gun", "bits", "trig", "bolt", "undo", "boot"]} pressed="waves" />
              <Group names={["diamond", "cross", "eq"]} />
              <Group names={["stop", "walk", "walkg"]} />
            </div>
            <div className="ml-[8px] flex items-center">
              <svg width="11" height="21" viewBox="0 0 11 21" fill="none" className="mt-[3px] block">
                <path d="M.5 .5h9v15l-4.500 4.500-4.500-4.500z" fill="#f0f0f0" stroke="#fff" />
                <path d="M9.500 0v15.500l-4.500 4.500" stroke="#696969" />
              </svg>
              <div className="h-[3px] w-[228px] border-t border-b border-t-[#a0a0a0] border-b-white bg-[#696969]" />
            </div>
            <div className="mt-[3px] ml-[9px]">
              <Tool name="run" />
            </div>
            <div className={`${SANS} mt-[3px] ml-[5px] h-[22px] w-[251px] border border-[#696969] pr-[2px] text-right text-[12px] leading-[20px] text-black`}>3.12 us</div>
            <div className="ml-[6px] h-[28px] w-[2px] border-l border-[#a0a0a0] bg-white" />
          </div>
        </div>
      </div>
      <div className="flex h-[1069px] border-t border-[#a0a0a0]">
        <div className="flex w-[2411px] flex-col border-t border-white pt-[6px] pl-[8px]">
          <div className="h-[1036px] w-[2398px] border-t border-r border-b border-l border-t-white border-r-black border-b-black border-l-white">
            <div className="h-[1034px] border-r border-b border-[#a0a0a0] p-[4px]">
              <div className="flex h-[1025px] w-[2387px] flex-col shadow-[inset_1px_1px_#a0a0a0,inset_2px_2px_#696969,inset_-1px_-1px_#ffffff,inset_-2px_-2px_#e3e3e3]">
                <div className="flex pt-[2px] pl-[2px]">
                  <Schematic />
                  <div className="flex h-[1004px] w-[17px] flex-col items-start border-l border-white">
                    <Chevron d={UP} />
                    <div className="mt-[255px] h-[435px] w-[15px] bg-[#cdcdcd]" />
                    <div className="mt-auto">
                      <Chevron d={DOWN} />
                    </div>
                  </div>
                </div>
                <div className="ml-[2px] flex h-[17px] w-[2366px] items-start border-t border-white">
                  <Chevron d={LEFT} />
                  <div className="h-[15px] w-[2332px] bg-[#cdcdcd]" />
                  <Chevron d={RIGHT} />
                </div>
              </div>
            </div>
          </div>
          <div className="relative -mt-[2px] ml-[3px] flex h-[25px] w-[154px] items-center rounded-bl-[3px] border-r-2 border-b-2 border-l border-r-black border-b-black border-l-white bg-[#f0f0f0] pl-[3px]">
            <CircuitIcon />
            <span className={`${SANS} ml-[39px] text-[12px] tracking-[0.15px] whitespace-nowrap text-black`}>Circuit1,cct</span>
          </div>
        </div>
        <LibraryPanel />
      </div>
      <TimingDock />
      <div className={`${UI} flex h-[21px] border-t border-[#a0a0a0] text-[12px] tracking-[-0.3px] text-black`}>
        <div className="flex flex-1 border-t border-white">
          <span className="pl-[2px] leading-[21px]">Selection Interval</span>
          <div className="mt-[2px] ml-auto flex h-[17px] gap-[3px]">
            <div className="w-[28px] border border-t-[#a0a0a0] border-r-white border-b-white border-l-[#a0a0a0]" />
            <div className="w-[33px] border border-t-[#a0a0a0] border-r-white border-b-white border-l-[#a0a0a0] pl-px leading-[16px]">NUM</div>
            <div className="w-[34px] border border-t-[#a0a0a0] border-r-white border-b-white border-l-[#a0a0a0]" />
          </div>
        </div>
      </div>
      <Taskbar />
    </div>
  );
}
